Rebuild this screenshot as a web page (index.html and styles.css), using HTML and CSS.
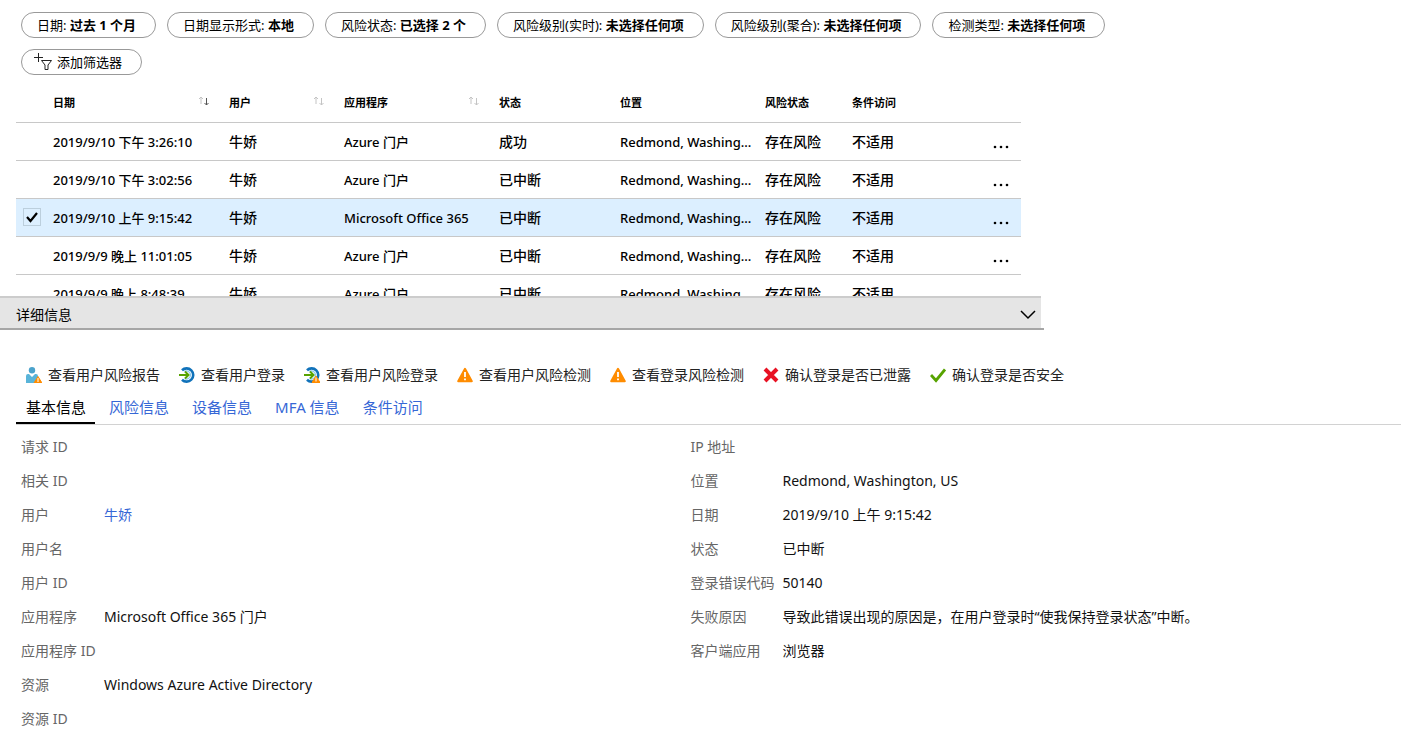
FILE: index.html
```
<!DOCTYPE html>
<html lang="zh-CN">
<head>
<meta charset="utf-8">
<title>登录</title>
<link rel="stylesheet" href="styles.css">
</head>
<body>
<svg class="defs" aria-hidden="true">
  <symbol id="sort" viewBox="0 0 12 10"><path class="up" d="M3 8V1M1 3l2-2 2 2"/><path class="down" d="M8.500 2v7M6.500 7l2 2 2-2"/></symbol>
  <symbol id="warn" viewBox="0 0 16 16"><path d="M8 1.800 14.800 14.200H1.200z" fill="#ff8c00" stroke="#ff8c00" stroke-width="2" stroke-linejoin="round"/><path d="M8 5v5M8 11.500v1.800" stroke="#fff" stroke-width="1.800" fill="none"/></symbol>
  <symbol id="signin" viewBox="0 0 16 16"><path d="M3 3.300A6.600 6.600 0 1 1 3 12.700" fill="none" stroke="#1072ba" stroke-width="2.600"/><path d="M5.500 4.500a4 4 0 0 1 6 3.500 4 4 0 0 1-6 3.500" fill="none" stroke="#8cc8ec" stroke-width="1.300"/><path d="M0 8h9M6 4.500 9.500 8 6 11.500" fill="none" stroke="#57a300" stroke-width="2"/></symbol>
</svg>

<section class="filters" aria-label="筛选器">
  <button class="pill">日期: <b>过去 1 个月</b></button>
  <button class="pill">日期显示形式: <b>本地</b></button>
  <button class="pill">风险状态: <b>已选择 2 个</b></button>
  <button class="pill">风险级别(实时): <b>未选择任何项</b></button>
  <button class="pill">风险级别(聚合): <b>未选择任何项</b></button>
  <button class="pill">检测类型: <b>未选择任何项</b></button>
  <button class="pill pill-add"><svg class="add-icon" viewBox="0 0 20 18"><path d="M5.500 0v9M1 4.500h9" /><path d="M8.500 7.500h10l-3.500 4.500v4.500h-3v-4.500z"/></svg>添加筛选器</button>
</section>

<section class="list">
  <table class="signins">
    <colgroup><col class="c-check"><col class="c-date"><col class="c-user"><col class="c-app"><col class="c-status"><col class="c-place"><col class="c-risk"><col class="c-access"><col class="c-menu"></colgroup>
    <thead>
      <tr>
        <th></th>
        <th>日期<svg class="sort" viewBox="0 0 12 10"><path d="M3 8V1M1 3l2-2 2 2"/><path class="sorted" d="M8.500 2v7M6.500 7l2 2 2-2"/></svg></th>
        <th>用户<svg class="sort"><use href="#sort"/></svg></th>
        <th>应用程序<svg class="sort"><use href="#sort"/></svg></th>
        <th>状态</th><th>位置</th><th>风险状态</th><th>条件访问</th><th></th>
      </tr>
    </thead>
    <tbody>
      <tr><td></td><td class="latin">2019/9/10 下午 3:26:10</td><td>牛娇</td><td class="latin">Azure 门户</td><td>成功</td><td class="latin">Redmond, Washing...</td><td>存在风险</td><td>不适用</td><td class="menu"><button class="more" aria-label="更多"><svg viewBox="0 0 16 4"><circle cx="2" cy="2" r="1.300"/><circle cx="8" cy="2" r="1.300"/><circle cx="14" cy="2" r="1.300"/></svg></button></td></tr>
      <tr><td></td><td class="latin">2019/9/10 下午 3:02:56</td><td>牛娇</td><td class="latin">Azure 门户</td><td>已中断</td><td class="latin">Redmond, Washing...</td><td>存在风险</td><td>不适用</td><td class="menu"><button class="more" aria-label="更多"><svg viewBox="0 0 16 4"><circle cx="2" cy="2" r="1.300"/><circle cx="8" cy="2" r="1.300"/><circle cx="14" cy="2" r="1.300"/></svg></button></td></tr>
      <tr class="selected"><td class="pick"><input type="checkbox" checked aria-label="选择行"></td><td class="latin">2019/9/10 上午 9:15:42</td><td>牛娇</td><td class="latin">Microsoft Office 365</td><td>已中断</td><td class="latin">Redmond, Washing...</td><td>存在风险</td><td>不适用</td><td class="menu"><button class="more" aria-label="更多"><svg viewBox="0 0 16 4"><circle cx="2" cy="2" r="1.300"/><circle cx="8" cy="2" r="1.300"/><circle cx="14" cy="2" r="1.300"/></svg></button></td></tr>
      <tr><td></td><td class="latin">2019/9/9 晚上 11:01:05</td><td>牛娇</td><td class="latin">Azure 门户</td><td>已中断</td><td class="latin">Redmond, Washing...</td><td>存在风险</td><td>不适用</td><td class="menu"><button class="more" aria-label="更多"><svg viewBox="0 0 16 4"><circle cx="2" cy="2" r="1.300"/><circle cx="8" cy="2" r="1.300"/><circle cx="14" cy="2" r="1.300"/></svg></button></td></tr>
      <tr><td></td><td class="latin">2019/9/9 晚上 8:48:39</td><td>牛娇</td><td class="latin">Azure 门户</td><td>已中断</td><td class="latin">Redmond, Washing...</td><td>存在风险</td><td>不适用</td><td></td></tr>
    </tbody>
  </table>
</section>

<div class="details-bar">
  <button class="details-toggle">详细信息<svg class="chevron" viewBox="0 0 16 10"><path d="M1 1l7 7 7-7"/></svg></button>
</div>

<nav class="actions" aria-label="操作">
  <button class="action"><svg viewBox="0 0 16 16"><circle cx="6" cy="3.200" r="3.200" fill="#4ba3cc"/><path d="M0 16V9q0-2 2-2h1l3 3 3-3h1q2 0 2 2v7z" fill="#59b4d9"/><path d="M12 9.500 16 16H8z" fill="#ff8c00" stroke="#ff8c00" stroke-linejoin="round"/><path d="M12 11v4" stroke="#fff"/></svg>查看用户风险报告</button>
  <button class="action"><svg viewBox="0 0 16 16"><use href="#signin"/></svg>查看用户登录</button>
  <button class="action"><svg viewBox="0 0 16 16"><use href="#signin"/><path d="M12 9 16 15.500H8z" fill="#ff8c00" stroke="#ff8c00" stroke-linejoin="round"/><path d="M12 10.500v4" stroke="#fff"/></svg>查看用户风险登录</button>
  <button class="action"><svg><use href="#warn"/></svg>查看用户风险检测</button>
  <button class="action"><svg><use href="#warn"/></svg>查看登录风险检测</button>
  <button class="action"><svg viewBox="0 0 16 16"><path d="M2 2l12 12M14 2 2 14" stroke="#e81123" stroke-width="4" fill="none"/></svg>确认登录是否已泄露</button>
  <button class="action"><svg viewBox="0 0 16 16"><path d="M1 8l5 5.500L15 2.500" stroke="#57a300" stroke-width="2.800" fill="none"/></svg>确认登录是否安全</button>
</nav>

<div class="tabs" role="tablist">
  <button class="tab active" role="tab" aria-selected="true">基本信息</button>
  <button class="tab" role="tab">风险信息</button>
  <button class="tab" role="tab">设备信息</button>
  <button class="tab" role="tab">MFA 信息</button>
  <button class="tab" role="tab">条件访问</button>
</div>

<section class="info">
  <dl class="fields left">
    <dt>请求 ID</dt><dd></dd>
    <dt>相关 ID</dt><dd></dd>
    <dt>用户</dt><dd><a href="#">牛娇</a></dd>
    <dt>用户名</dt><dd></dd>
    <dt>用户 ID</dt><dd></dd>
    <dt>应用程序</dt><dd>Microsoft Office 365 门户</dd>
    <dt>应用程序 ID</dt><dd></dd>
    <dt>资源</dt><dd>Windows Azure Active Directory</dd>
    <dt>资源 ID</dt><dd></dd>
  </dl>
  <dl class="fields right">
    <dt>IP 地址</dt><dd></dd>
    <dt>位置</dt><dd>Redmond, Washington, US</dd>
    <dt>日期</dt><dd>2019/9/10 上午 9:15:42</dd>
    <dt>状态</dt><dd>已中断</dd>
    <dt>登录错误代码</dt><dd>50140</dd>
    <dt>失败原因</dt><dd>导致此错误出现的原因是，在用户登录时“使我保持登录状态”中断。</dd>
    <dt>客户端应用</dt><dd>浏览器</dd>
  </dl>
</section>
</body>
</html>
```
FILE: styles.css
```
* { box-sizing: border-box; }
body {
  margin: 0;
  background: #fff;
  color: #000;
  font: 14px/20px "Noto Sans", "Noto Sans CJK SC", sans-serif;
}
button {
  margin: 0;
  padding: 0;
  border: 0;
  background: none;
  color: inherit;
  font: inherit;
  white-space: nowrap;
}
svg { flex: none; fill: none; stroke-width: 1; }
.defs { display: none; }

.filters {
  display: flex;
  flex-wrap: wrap;
  gap: 11px;
  width: 82%;
  padding: 12px 0 8px 21px;
}
.pill {
  height: 26px;
  padding: 0 19px 0 15px;
  border: 1px solid #999;
  border-radius: 13px;
  font-size: 13px;
  line-height: 24px;
}
.pill-add { display: flex; align-items: center; padding: 0 19px 0 11px; }
.add-icon { width: 20px; height: 18px; margin-right: 4px; stroke: #222; }

.list {
  width: 74%;
  height: 213px;
  padding: 0 20px 0 16px;
  overflow: hidden;
}
.signins { width: 100%; border-collapse: collapse; table-layout: fixed; }
.c-check { width: 37px; }
.c-date { width: 176px; }
.c-user { width: 115px; }
.c-app { width: 155px; }
.c-status { width: 121px; }
.c-place { width: 145px; }
.c-risk { width: 87px; }
.c-access { width: 90px; }
.signins th, .signins td {
  height: 38px;
  padding: 1px 0 0;
  border-bottom: 1px solid #c8c8c8;
  text-align: left;
  font-weight: 500;
  white-space: nowrap;
}
.signins th { height: 39px; font-size: 11px; font-weight: 700; }
.signins .latin { font-size: 13px; }
.sort {
  float: right;
  width: 12px;
  height: 10px;
  margin: 3px 19px 0 0;
  stroke: #c4c4c4;
}
.sorted { stroke: #555; }
.signins .selected td { background: #dcefff; }
.signins .pick { padding: 0 0 0 7px; }
.pick input {
  appearance: none;
  display: block;
  width: 18px;
  height: 18px;
  margin: 0;
  border: 1px solid #bccfdd;
  background: url("data:image/svg+xml,%3Csvg xmlns='http://www.w3.org/2000/svg' viewBox='0 0 16 16'%3E%3Cpath d='M3 8l3.500 4L13 4' fill='none' stroke='%23000' stroke-width='2.200'/%3E%3C/svg%3E") center / 16px no-repeat;
}
.signins .menu { padding: 6px 12px 0 0; text-align: right; }
.more svg { display: block; width: 16px; height: 4px; fill: #000; }

.details-bar { width: 74.2%; padding-right: 3px; border-bottom: 2px solid #a6a6a6; }
.details-toggle {
  display: flex;
  align-items: center;
  justify-content: space-between;
  width: 100%;
  height: 32px;
  padding: 3px 5px 0 16px;
  border-top: 2px solid #ccc;
  background: #e5e5e5;
}
.chevron { width: 16px; height: 10px; stroke: #000; stroke-width: 1.500; }

.actions {
  display: flex;
  flex-wrap: wrap;
  gap: 19px;
  padding: 35px 0 0 26px;
  color: #222;
}
.action { display: flex; align-items: center; gap: 6px; }
.action svg { width: 16px; height: 16px; }

.tabs {
  display: flex;
  gap: 4px;
  margin: 12px 6px 0 16px;
  border-bottom: 1px solid #d2d2d2;
}
.tab {
  height: 27px;
  padding: 0 9px 5px 10px;
  border-bottom: 2px solid transparent;
  color: #3667d6;
  font-size: 15px;
  line-height: 20px;
}
.active { border-color: #000; color: #000; }

.info { display: flex; padding: 12px 0 0 21px; color: #111; }
.fields { display: grid; gap: 14px 0; align-content: start; margin: 0; }
.left { width: 48.3%; grid-template-columns: 83px 1fr; }
.right { flex: 1; grid-template-columns: 92px 1fr; }
dt { color: #666; white-space: nowrap; }
dd { margin: 0; height: 20px; }
a { color: #3667d6; text-decoration: none; }
```
